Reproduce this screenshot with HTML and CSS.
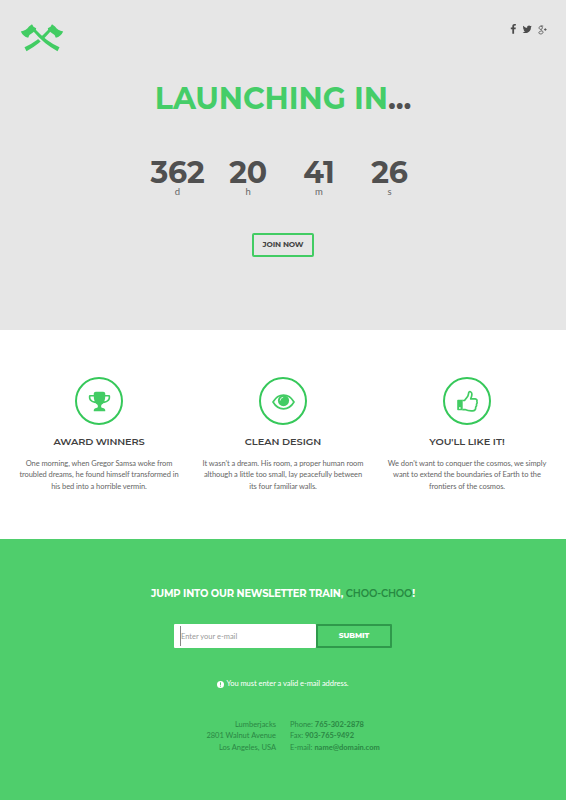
FILE: index.html
```html
<!DOCTYPE html>
<html lang="en">
<head>
<meta charset="utf-8">
<title>Lumberjacks</title>
<link rel="stylesheet" href="styles.css">
</head>
<body>
<section class="hero">
  <header class="top">
    <svg class="logo" viewBox="0 0 44 28" aria-label="Lumberjacks">
      <defs><g id="axe"><path d="M.8 7.500Q6.500 6.500 9 2.500L12 .3 13.500 2.700 16.200 4.200 15.800 6 13 8.500Q9.500 10 8.200 13.800 3 12.500.8 7.500Z"/><path d="M13.500 7.500Q24 20 37.500 27.200L39.500 23.200Q27 18 15.500 5.500Z"/></g></defs>
      <use href="#axe" transform="translate(44) scale(-1 1)"/>
      <path class="gap" d="M18 12Q22 16 26 19"/>
      <use href="#axe"/>
    </svg>
    <nav class="social">
      <svg class="fb" viewBox="0 0 1792 1792"><path d="M1343 12v264h-157q-86 0-116 36t-30 108v189h293l-39 296h-254v759h-306v-759h-255v-296h255v-218q0-186 104-288.500t277-102.500q147 0 228 12z"/></svg>
      <svg class="tw" viewBox="0 0 1792 1792"><path d="M1684 408q-67 98-162 167 1 14 1 42 0 130-38 259.500t-115.500 248.500-184.500 210.500-258 146-323 54.500q-271 0-496-145 35 4 78 4 225 0 401-138-105-2-188-64.500t-114-159.500q33 5 61 5 43 0 85-11-112-23-185.500-111.500t-73.500-205.500v-4q68 38 146 41-66-44-105-115t-39-154q0-88 44-163 121 149 294.500 238.500t371.500 99.500q-8-38-8-74 0-134 94.500-228.500t228.500-94.500q140 0 236 102 109-21 205-78-37 115-142 178 93-10 186-50z"/></svg>
      <svg class="gp" viewBox="0 0 10 10"><path d="M5.800.6H3.200C.6.900.6 4.300 2.900 4.300 5.600 4.300 5.300.6 3.200.6M3.600 4.300Q3.300 5 4.200 5.600C7 7.500 5 9.400 3 9.400.2 9.400 0 6.300 4.200 6.100M6.600 4.500H9.600M8.100 3V6"/></svg>
    </nav>
  </header>
  <h1><span>LAUNCHING IN</span><b>...</b></h1>
  <div class="timer">
    <div><strong>362</strong><small>d</small></div>
    <div><strong>20</strong><small>h</small></div>
    <div><strong>41</strong><small>m</small></div>
    <div><strong>26</strong><small>s</small></div>
  </div>
  <a class="join">JOIN NOW</a>
</section>
<section class="features">
  <article>
    <div class="ring"><svg viewBox="0 0 1792 1792"><path d="M522 883q-74-162-74-371h-256v96q0 78 94.500 162t235.500 113zm1078-275v-96h-256q0 209-74 371 141-29 235.500-113t94.500-162zm128-128v128q0 71-41.500 143t-112 130-173 97.500-215.500 44.500q-42 54-95 95-38 34-52.500 72.500t-14.500 89.500q0 54 30.500 91t97.500 37q75 0 133.500 45.500t58.500 114.500v64q0 14-9 23t-23 9h-832q-14 0-23-9t-9-23v-64q0-69 58.500-114.500t133.500-45.500q67 0 97.500-37t30.500-91q0-51-14.500-89.500t-52.500-72.500q-53-41-95-95-113-5-215.500-44.500t-173-97.500-112-130-41.500-143v-128q0-40 28-68t68-28h288v-96q0-66 47-113t113-47h576q66 0 113 47t47 113v96h288q40 0 68 28t28 68z"/></svg></div>
    <h2 class="t1">AWARD WINNERS</h2>
    <p>One morning, when Gregor Samsa woke from<br>troubled dreams, he found himself transformed in<br>his bed into a horrible vermin.</p>
  </article>
  <article>
    <div class="ring"><svg viewBox="0 0 23 23"><path class="line" d="M1 12Q5 5 11.500 5T22 12Q18 18.800 11.500 18.800T1 12Z"/><circle cx="11.500" cy="10.600" r="5.600"/><path class="shine" d="M8.200 10.600Q8.200 7.500 11.200 7.300"/></svg></div>
    <h2 class="t2">CLEAN DESIGN</h2>
    <p>It wasn't a dream. His room, a proper human room<br>although a little too small, lay peacefully between<br>its four familiar walls.</p>
  </article>
  <article>
    <div class="ring"><svg viewBox="0 0 23 23"><path class="line" d="M6.500 10.500H8.500L11.800 6.300Q12.400 4.800 12.800 2.400C13.200.9 15.800 1.700 15.900 4Q16 6 14.700 8.900H19.200Q21.500 9.200 20.900 11.300 21.600 12.800 20.500 14.300 21 15.900 19.700 17.200 19.900 20.800 16.500 20.900 12.500 21.200 9 19.600H6.500"/><path fill-rule="evenodd" d="M2 9.700H6.700V20.300H2Q1.200 20.300 1.200 19.500V10.500Q1.200 9.700 2 9.700ZM3 17.200V18.800H4.600V17.200Z"/></svg></div>
    <h2 class="t3">YOU'LL LIKE IT!</h2>
    <p>We don't want to conquer the cosmos, we simply<br>want to extend the boundaries of Earth to the<br>frontiers of the cosmos.</p>
  </article>
</section>
<section class="news">
  <h3>JUMP INTO OUR NEWSLETTER TRAIN, <span>CHOO-CHOO</span>!</h3>
  <div class="form"><div class="field"><span>Enter your e-mail</span></div><a class="submit">SUBMIT</a></div>
  <p class="error"><svg viewBox="0 0 8 8"><circle cx="4" cy="4" r="4"/><path d="M4 1.500V4.500M4 5.300V6.500"/></svg>You must enter a valid e-mail address.</p>
  <footer>
    <address>Lumberjacks<br>2801 Walnut Avenue<br>Los Angeles, USA</address>
    <div>Phone: <b>765-302-2878</b><br>Fax: <b>903-765-9492</b><br>E-mail: <b>name@domain.com</b></div>
  </footer>
</section>
</body>
</html>
```
FILE: styles.css
```css
* { box-sizing: border-box; margin: 0; padding: 0; }
body { width: 566px; height: 800px; overflow: hidden; background: #fff; font: 7.5px/11.3px Lato, sans-serif; color: #666; }
svg { display: block; }
h1, h2, h3, strong, .join, .submit { font-family: Montserrat, Inter, sans-serif; white-space: nowrap; }
.hero { height: 330px; background: #e6e6e6; display: flex; flex-direction: column; align-items: center; }
.top { width: 100%; height: 82px; padding: 24px 19px 0 20px; display: flex; justify-content: space-between; align-items: flex-start; }
.logo { width: 44px; height: 28px; fill: #42cc63; }
.logo .gap { fill: none; stroke: #e6e6e6; stroke-width: 4.5; }
.social { display: flex; align-items: center; height: 11px; fill: #4b4b4b; }
.fb, .tw { width: 10.5px; height: 10.5px; margin-right: 3px; }
.tw { margin-right: 6px; }
.gp { width: 9px; height: 10px; fill: none; stroke: #4b4b4b; stroke-width: .9; }
h1 { height: 34px; font-size: 30px; line-height: 34px; font-weight: 700; letter-spacing: -.1px; color: #45cd68; }
h1 b { font-weight: 700; color: #505050; }
.timer { display: grid; grid-template-columns: repeat(4, 70.7px); margin: 41px 0 0 1px; height: 76px; }
.timer div { display: flex; flex-direction: column; align-items: center; color: #505050; }
.timer strong { font-size: 30px; line-height: 31px; font-weight: 700; letter-spacing: -.2px; }
.timer small { font-size: 9.5px; line-height: 8px; color: #666; }
.join { width: 62px; height: 24px; border: 2px solid #42cc63; border-radius: 2px; font-size: 7.5px; line-height: 20px; font-weight: 700; letter-spacing: -.15px; text-align: center; color: #444; }
.features { height: 209px; padding: 47px 7px 0; display: grid; grid-template-columns: repeat(3, 184px); }
.features article { display: flex; flex-direction: column; align-items: center; text-align: center; }
.ring { width: 48px; height: 48px; border: 2px solid #36c85a; border-radius: 50%; display: grid; place-items: center; }
.ring svg { width: 23px; height: 23px; fill: #42cc63; }
.ring .line { fill: none; stroke: #42cc63; stroke-width: 1.7; stroke-linejoin: round; }
.ring .shine { fill: none; stroke: #fff; stroke-width: .8; }
h2 { margin-top: 10px; font-size: 9.8px; line-height: 13px; font-weight: 600; letter-spacing: -.15px; color: #404040; }
.t2, .t3 { letter-spacing: -.05px; }
.features p { margin-top: 10px; white-space: nowrap; letter-spacing: -.065px; }
.news { height: 261px; background: #4fce6c; display: flex; flex-direction: column; align-items: center; color: #fff; }
h3 { margin-top: 48px; font-size: 10px; line-height: 13px; font-weight: 700; letter-spacing: -.19px; }
h3 span { color: #278a42; font-weight: 600; }
.form { display: flex; margin-top: 24px; width: 218px; height: 25px; }
.field { width: 142px; height: 24px; background: #fff; border-radius: 1px; padding: 2px 0 0 6px; }
.field span { display: block; border-left: 1px solid #888; height: 20px; line-height: 21px; color: #999; }
.submit { width: 76px; height: 24px; border: 2px solid #2f994b; border-radius: 1px; text-align: center; font-size: 7.5px; line-height: 20px; font-weight: 800; letter-spacing: -.1px; }
.error { display: flex; align-items: center; margin-top: 29px; height: 12px; white-space: nowrap; letter-spacing: -.03px; }
.error svg { width: 7px; height: 7px; fill: #fff; stroke: #4fce6c; stroke-width: 1.1; margin-right: 2px; }
.error circle { stroke: none; }
footer { display: grid; grid-template-columns: 276px 276px; gap: 14px; width: 566px; margin-top: 29px; color: #2b8744; }
address { font-style: normal; text-align: right; }
```
